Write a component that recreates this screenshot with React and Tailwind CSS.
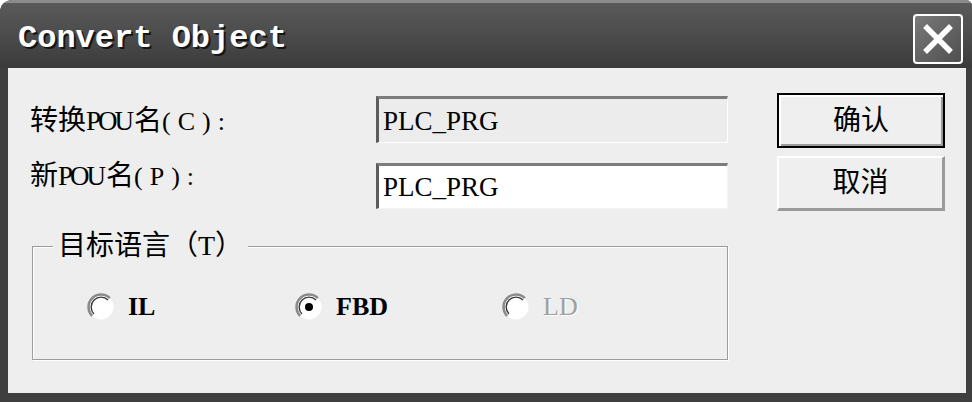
import React from "react";

const MONO = { fontFamily: '"Liberation Mono", "Noto Sans CJK SC", monospace' };
const SERIF = { fontFamily: '"Liberation Serif", "Noto Sans CJK SC", serif' };

function Radio({ checked }) {
  return (
    <svg width="28" height="28" viewBox="0 0 28 28">
      <circle cx="14" cy="14" r="12.5" fill="#ffffff" />
      <path d="M5.2 22.8 A12.4 12.4 0 0 1 22.8 5.2" fill="none" stroke="#8a8a8a" strokeWidth="2.6" />
      <path d="M7 21 A9.9 9.9 0 0 1 21 7" fill="none" stroke="#3a3a3a" strokeWidth="1.4" />
      {checked && <circle cx="14" cy="14" r="4" fill="#000000" />}
    </svg>
  );
}

function Label({ pre, latin, post, className }) {
  return (
    <span className={"text-[28px] leading-[32px] text-black whitespace-nowrap " + className} style={SERIF}>
      {pre}
      <span className="text-[27px] tracking-[-3px] pr-[3px]">{latin}</span>
      名
      <span className="text-[26px] tracking-[7px]">{post}</span>
    </span>
  );
}

export default function App() {
  return (
    <div className="w-[972px] h-[402px] bg-white" style={SERIF}>
      <div className="w-full h-full rounded-tl-[12px] rounded-tr-[6px] bg-[#3f3f3f] flex flex-col overflow-hidden">
        {/* Title bar */}
        <div className="h-[68px] shrink-0 flex items-center justify-between pl-[18px] pr-[9px] pt-[6px] border-t-[3px] border-[#8c8c8c] bg-gradient-to-b from-[#5a5a5a] via-[#4b4b4b] to-[#3b3b3b]">
          <span className="text-[32px] leading-[36px] font-bold text-white [text-shadow:2px_2px_0_#151515]" style={MONO}>
            Convert Object
          </span>
          <div className="w-[50px] h-[50px] border-2 border-white rounded-[4px] bg-gradient-to-br from-[#7a7a7a] to-[#4f4f4f] flex items-center justify-center">
            <svg width="32" height="32" viewBox="0 0 32 32">
              <path d="M5 5 L27 27 M27 5 L5 27" stroke="#ffffff" strokeWidth="5.5" strokeLinecap="square" />
            </svg>
          </div>
        </div>

        {/* Body */}
        <div className="flex-1 ml-[8px] mr-[6px] mb-[9px] bg-[#eeeeee] flex">
          {/* Left column */}
          <div className="pl-[22px] pt-[28px] flex flex-col">
            <div className="w-[698px] h-[47px] flex items-center justify-between">
              <Label pre="转换" latin="POU" post="(C):" className="mt-[4px]" />
              <div className="w-[352px] h-[47px] bg-[#ececec] border-t-[3px] border-l-[3px] border-t-[#7c7c7c] border-l-[#5c5c5c] border-r border-b border-r-white border-b-white flex items-center pl-[4px]">
                <span className="text-[27px] leading-[32px] text-black">PLC_PRG</span>
              </div>
            </div>
            <div className="w-[698px] h-[46px] mt-[20px] flex items-start justify-between">
              <Label pre="新" latin="POU" post="(P):" className="-mt-[3px]" />
              <div className="w-[352px] h-[46px] bg-white border-t-[3px] border-l-[3px] border-t-[#7c7c7c] border-l-[#5c5c5c] border-r border-b border-r-[#f4f4f4] border-b-[#f4f4f4] flex items-center pl-[4px]">
                <span className="text-[27px] leading-[32px] text-black">PLC_PRG</span>
              </div>
            </div>

            {/* Group box */}
            <div className="relative mt-[37px] ml-[2px] w-[696px] h-[114px] border border-[#9c9c9c] shadow-[inset_1px_1px_0_#ffffff,1px_1px_0_#ffffff]">
              <span className="absolute left-[20px] -top-[17px] px-[5px] bg-[#eeeeee] text-[28px] leading-[32px] text-black whitespace-nowrap">
                目标语言（T）
              </span>
              <div className="pl-[54px] pt-[46px] flex">
                <div className="w-[208px] flex items-center gap-[13px]">
                  <Radio />
                  <span className="text-[26px] leading-[28px] font-bold text-black">IL</span>
                </div>
                <div className="w-[207px] flex items-center gap-[13px]">
                  <Radio checked />
                  <span className="text-[26px] leading-[28px] font-bold text-black">FBD</span>
                </div>
                <div className="flex items-center gap-[13px]">
                  <Radio />
                  <span className="text-[26px] leading-[28px] text-[#a0a0a0] [text-shadow:1px_1px_0_#ffffff]">LD</span>
                </div>
              </div>
            </div>
          </div>

          {/* Right column: buttons */}
          <div className="ml-[49px] pt-[25px] flex flex-col gap-[8px]">
            <div className="w-[168px] h-[55px] border-2 border-black bg-[#efefef] shadow-[inset_2px_2px_0_#ffffff,inset_-2px_-2px_0_#9a9a9a] flex items-center justify-center">
              <span className="text-[28px] leading-[32px] text-black">确认</span>
            </div>
            <div className="w-[168px] h-[55px] bg-[#efefef] border-t-2 border-l-2 border-t-white border-l-white border-r-[3px] border-b-[3px] border-r-[#9a9a9a] border-b-[#9a9a9a] flex items-center justify-center">
              <span className="text-[28px] leading-[32px] text-black">取消</span>
            </div>
          </div>
        </div>
      </div>
    </div>
  );
}
